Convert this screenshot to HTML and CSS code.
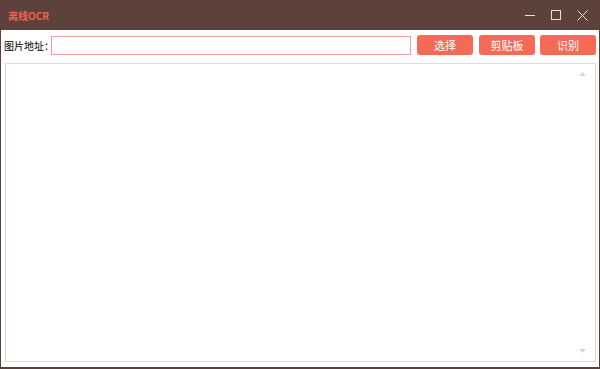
FILE: index.html
```html
<!DOCTYPE html>
<html lang="zh-CN">
<head>
    <meta charset="UTF-8">
    <title>离线OCR</title>
    <link rel="stylesheet" href="styles.css">
</head>
<body>
    <div class="window">
        <div class="titlebar">
            <span class="title">离线OCR</span>
            <div class="controls">
                <span class="ctl">
                    <svg width="10" height="10" viewBox="0 0 10 10"><path d="M0 5.5h10" stroke="#e8e0de" stroke-width="1"/></svg>
                </span>
                <span class="ctl">
                    <svg width="10" height="10" viewBox="0 0 10 10"><rect x="0.5" y="0.5" width="9" height="9" fill="none" stroke="#e8e0de" stroke-width="1"/></svg>
                </span>
                <span class="ctl">
                    <svg width="11" height="11" viewBox="0 0 11 11"><path d="M0.5 0.5l10 10M10.5 0.5l-10 10" stroke="#e8e0de" stroke-width="1"/></svg>
                </span>
            </div>
        </div>
        <div class="content">
            <div class="toolbar">
                <label class="label" for="path">图片地址：</label>
                <input class="path" id="path" type="text">
                <button class="button">选择</button>
                <button class="button">剪贴板</button>
                <button class="button">识别</button>
            </div>
            <div class="result">
                <div class="scroll">
                    <svg width="7" height="4" viewBox="0 0 7 4"><path d="M0 4L3.5 0L7 4z" fill="#d6d6d6"/></svg>
                    <svg width="7" height="4" viewBox="0 0 7 4"><path d="M0 0L3.5 4L7 0z" fill="#d6d6d6"/></svg>
                </div>
            </div>
        </div>
    </div>
</body>
</html>
```

FILE: styles.css
```css
body {
    margin: 0;
    font-family: "Noto Sans CJK SC", "Noto Sans", sans-serif;
    background-color: #5d423c;
}
.window {
    width: 600px;
    height: 369px;
    box-sizing: border-box;
    border: 1px solid #5d423c;
    border-top: none;
    border-bottom-width: 2px;
    display: flex;
    flex-direction: column;
}
.titlebar {
    height: 30px;
    flex: none;
    display: flex;
    align-items: center;
    justify-content: space-between;
    background-color: #5d423c;
    padding-left: 7px;
}
.title {
    color: #f0634e;
    font-size: 10px;
    font-weight: bold;
}
.controls {
    display: flex;
    height: 30px;
    padding-right: 4px;
}
.ctl {
    width: 26px;
    display: flex;
    align-items: center;
    justify-content: center;
}
.content {
    flex: 1;
    background-color: #ffffff;
    display: flex;
    flex-direction: column;
    padding: 5px 3px 5px 3px;
}
.toolbar {
    display: flex;
    align-items: center;
    height: 20px;
}
.label {
    flex: none;
    white-space: nowrap;
    font-size: 10px;
    color: #000000;
    width: 47px;
}
.path {
    flex: none;
    width: 360px;
    height: 19px;
    box-sizing: border-box;
    border: 1px solid #f2a294;
    margin: 0 6px 0 0;
    padding: 0 3px;
}
.button {
    flex: none;
    width: 56px;
    height: 20px;
    margin-right: 6px;
    border: none;
    border-radius: 3px;
    background-color: #f56a55;
    color: #ffffff;
    font-family: "Noto Sans CJK SC", sans-serif;
    font-size: 11px;
    padding: 0;
}
.button:nth-of-type(2) {
    margin-right: 5px;
}
.button:last-child {
    margin-right: 0;
}
.result {
    margin: 8px 0 0 1px;
    flex: 1;
    border: 1px solid #dcdcdc;
    display: flex;
    justify-content: flex-end;
}
.scroll {
    width: 26px;
    display: flex;
    flex-direction: column;
    justify-content: space-between;
    align-items: center;
    padding: 8px 0 8px;
}
```
